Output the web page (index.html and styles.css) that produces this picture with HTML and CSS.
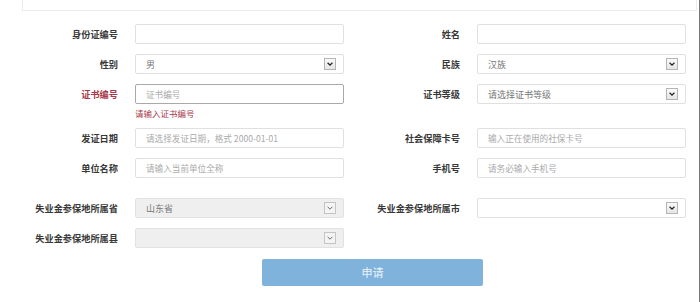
FILE: index.html
```html
<!DOCTYPE html>
<html lang="zh">
<head>
<meta charset="utf-8">
<title>申请</title>
<link rel="stylesheet" href="styles.css">
</head>
<body>
<div class="page">
  <div class="topbox"></div>
  <div class="form">
    <div class="row">
      <label class="label">身份证编号</label>
      <div class="input"></div>
      <label class="label">姓名</label>
      <div class="input"></div>
    </div>
    <div class="row">
      <label class="label">性别</label>
      <div class="input select"><span class="val">男</span><span class="arrow"><svg viewBox="0 0 10 10" width="8" height="8"><path d="M2 3.5 L5 6.5 L8 3.5" fill="none" stroke="#222" stroke-width="1.6"/></svg></span></div>
      <label class="label">民族</label>
      <div class="input select"><span class="val">汉族</span><span class="arrow"><svg viewBox="0 0 10 10" width="8" height="8"><path d="M2 3.5 L5 6.5 L8 3.5" fill="none" stroke="#222" stroke-width="1.6"/></svg></span></div>
    </div>
    <div class="row">
      <label class="label error-label">证书编号</label>
      <div class="cell">
        <div class="input focus"><span class="ph">证书编号</span></div>
        <div class="err">请输入证书编号</div>
      </div>
      <label class="label">证书等级</label>
      <div class="input select"><span class="val">请选择证书等级</span><span class="arrow"><svg viewBox="0 0 10 10" width="8" height="8"><path d="M2 3.5 L5 6.5 L8 3.5" fill="none" stroke="#222" stroke-width="1.6"/></svg></span></div>
    </div>
    <div class="row">
      <label class="label">发证日期</label>
      <div class="input"><span class="ph">请选择发证日期，格式 2000-01-01</span></div>
      <label class="label">社会保障卡号</label>
      <div class="input"><span class="ph">输入正在使用的社保卡号</span></div>
    </div>
    <div class="row row-wide">
      <label class="label">单位名称</label>
      <div class="input"><span class="ph">请输入当前单位全称</span></div>
      <label class="label">手机号</label>
      <div class="input"><span class="ph">请务必输入手机号</span></div>
    </div>
    <div class="row">
      <label class="label">失业金参保地所属省</label>
      <div class="input select disabled"><span class="val">山东省</span><span class="arrow light"><svg viewBox="0 0 10 10" width="8" height="8"><path d="M2 3.5 L5 6.5 L8 3.5" fill="none" stroke="#666" stroke-width="1.2"/></svg></span></div>
      <label class="label">失业金参保地所属市</label>
      <div class="input select"><span class="val"></span><span class="arrow"><svg viewBox="0 0 10 10" width="8" height="8"><path d="M2 3.5 L5 6.5 L8 3.5" fill="none" stroke="#222" stroke-width="1.6"/></svg></span></div>
    </div>
    <div class="row">
      <label class="label">失业金参保地所属县</label>
      <div class="input select disabled"><span class="val"></span><span class="arrow light"><svg viewBox="0 0 10 10" width="8" height="8"><path d="M2 3.5 L5 6.5 L8 3.5" fill="none" stroke="#666" stroke-width="1.2"/></svg></span></div>
    </div>
    <div class="actions">
      <button class="submit" type="button">申请</button>
    </div>
  </div>
</div>
</body>
</html>
```

FILE: styles.css
```css
html, body {
  margin: 0;
  padding: 0;
  background: #fff;
}
body {
  font-family: "Noto Sans CJK SC", "Noto Sans", sans-serif;
  color: #333;
}
.page {
  width: 700px;
  height: 302px;
  box-sizing: border-box;
  border-right: 1px solid #777;
  overflow: hidden;
}
.topbox {
  height: 10px;
  margin: 0 2px 0 22px;
  border: 1px solid #ececec;
  border-top: none;
}
.form {
  padding-top: 13px;
}
.row {
  display: grid;
  grid-template-columns: 118px 209px 99px 209px;
  column-gap: 17px;
  align-items: start;
  margin-bottom: 10px;
}
.row-wide {
  margin-bottom: 20px;
}
.label {
  height: 20px;
  line-height: 20px;
  text-align: right;
  font-size: 9.2px;
  font-weight: bold;
  color: #383838;
  white-space: nowrap;
}
.error-label {
  color: #a8394a;
}
.input {
  height: 20px;
  box-sizing: border-box;
  border: 1px solid #e0e0e0;
  border-radius: 2px;
  background: #fff;
  padding: 0 7px 0 10px;
  display: flex;
  align-items: center;
  font-size: 9px;
  color: #666;
}
.input.focus {
  border-color: #a9a9a9;
}
.ph {
  color: #aaa;
  white-space: nowrap;
  font-size: 8.6px;
}
.val {
  color: #777;
  white-space: nowrap;
}
.select {
  justify-content: space-between;
}
.select.disabled {
  background: #efefef;
  border-color: #e2e2e2;
}
.arrow {
  width: 12px;
  height: 12px;
  box-sizing: border-box;
  border: 1px solid #b5b5b5;
  background: linear-gradient(#fafafa, #e6e6e6);
  display: flex;
  align-items: center;
  justify-content: center;
}
.arrow.light {
  border-color: #c4c4c4;
  background: #f4f4f4;
}
.err {
  margin-top: 4px;
  height: 10px;
  line-height: 10px;
  font-size: 8.5px;
  color: #a8394a;
  white-space: nowrap;
}
.actions {
  padding-left: 262px;
}
.submit {
  width: 221px;
  height: 27px;
  border: none;
  border-radius: 2px;
  background: #80b3db;
  color: #eef4fa;
  font-family: "Noto Sans CJK SC", sans-serif;
  font-size: 11px;
  padding: 0;
  cursor: pointer;
}
```
